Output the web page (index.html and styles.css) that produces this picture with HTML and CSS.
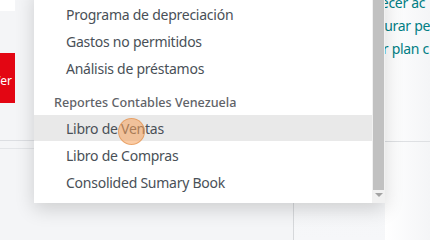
FILE: index.html
```html
<!DOCTYPE html>
<html lang="es">
<head>
<meta charset="utf-8">
<link rel="stylesheet" href="styles.css">
</head>
<body>
<div class="page">
  <div class="main">
    <div class="topbox"></div>
    <div class="redbtn"><span>Ver</span></div>
    <div class="rule rule1"></div>
    <div class="rule rule2"></div>
  </div>
  <div class="mid"></div>
  <div class="side">
    <div class="links">
      <a class="link">Establecer ac</a>
      <a class="link">Configurar pe</a>
      <a class="link">Revisar plan c</a>
    </div>
    <div class="side-rule"></div>
  </div>
</div>

<div class="menu">
  <div class="menu-list">
    <div class="item">Programa de depreciación</div>
    <div class="item">Gastos no permitidos</div>
    <div class="item">Análisis de préstamos</div>
    <div class="header">Reportes Contables Venezuela</div>
    <div class="item active">Libro de Ventas</div>
    <div class="item">Libro de Compras</div>
    <div class="item">Consolided Sumary Book</div>
  </div>
  <div class="scrollbar">
    <div class="thumb"></div>
    <div class="arrow"></div>
  </div>
</div>

<div class="cursor"></div>
</body>
</html>
```

FILE: styles.css
```css
* { box-sizing: border-box; }
html, body {
  margin: 0;
  width: 430px;
  height: 240px;
  overflow: hidden;
}
body {
  font-family: "Noto Sans", "Open Sans", sans-serif;
  background: #f3f4f6;
  position: relative;
}
.page {
  display: grid;
  grid-template-columns: 293px 92px 45px;
  height: 240px;
}
.main {
  display: flex;
  flex-direction: column;
  background: #f4f5f7;
}
.topbox {
  width: 15px;
  height: 11px;
  background: #ffffff;
}
.redbtn {
  margin-top: 42px;
  width: 15px;
  height: 50px;
  background: #e30613;
  overflow: hidden;
  display: flex;
  justify-content: flex-end;
  align-items: center;
}
.redbtn span {
  color: #ffffff;
  font-size: 12px;
  padding-right: 3px;
  padding-top: 4px;
  white-space: nowrap;
}
.rule {
  height: 1px;
  background: #dcdee2;
}
.rule1 { margin-top: 37px; }
.rule2 { margin-top: 7px; background: #e3e5e8; }
.mid {
  background: linear-gradient(#eef0f2, #f6f7f9);
  border-left: 1px solid #d6d8db;
}
.side {
  background: linear-gradient(90deg, #ffffff, #f4f5f7);
  display: flex;
  flex-direction: column;
}
.links {
  display: flex;
  flex-direction: column;
  margin-left: -42px;
  margin-top: -9px;
  height: 150px;
}
.link {
  color: #017e84;
  font-size: 14px;
  line-height: 23px;
  white-space: nowrap;
  letter-spacing: -0.3px;
}
.side-rule {
  height: 1px;
  background: #dee0e3;
}

.menu {
  position: absolute;
  left: 34px;
  top: -12px;
  width: 351px;
  height: 215px;
  background: #ffffff;
  box-shadow: 0 6px 18px rgba(0, 0, 0, 0.16);
  display: flex;
}
.menu-list {
  flex: 1;
  display: flex;
  flex-direction: column;
  padding-top: 13px;
}
.item {
  height: 27px;
  line-height: 27px;
  padding-left: 32px;
  font-size: 14px;
  letter-spacing: -0.25px;
  color: #495057;
  white-space: nowrap;
}
.item.active {
  background: #e9e9e9;
  height: 26px;
  margin-bottom: 1px;
}
.header {
  height: 33px;
  padding-top: 13px;
  line-height: 16px;
  padding-left: 20px;
  font-size: 12.6px;
  letter-spacing: 0;
  font-weight: 500;
  color: #5f6368;
  white-space: nowrap;
}
.scrollbar {
  width: 13px;
  background: #f1f1f1;
  display: flex;
  flex-direction: column;
  padding: 0 1px 3px 1px;
}
.thumb {
  height: 202px;
  background: #c1c1c1;
}
.arrow {
  height: 10px;
  display: flex;
  justify-content: center;
  align-items: center;
}
.arrow::after {
  content: "";
  border-left: 4px solid transparent;
  border-right: 4px solid transparent;
  border-top: 4px solid #a3a3a3;
}
.cursor {
  position: absolute;
  left: 118px;
  top: 118px;
  width: 27px;
  height: 27px;
  border-radius: 50%;
  background: rgba(245, 160, 90, 0.55);
  border: 1px solid rgba(225, 140, 70, 0.6);
}
```
